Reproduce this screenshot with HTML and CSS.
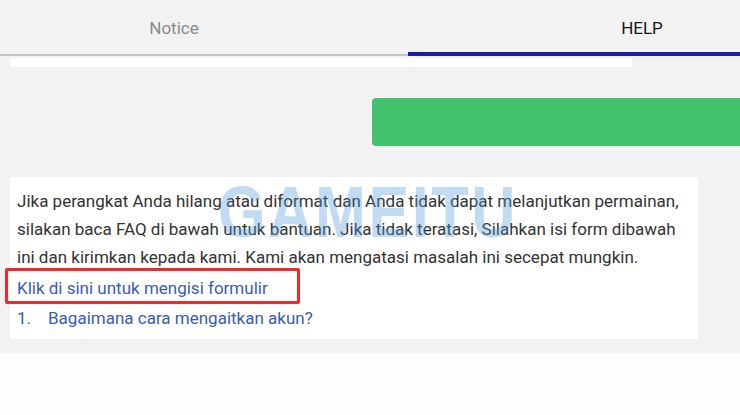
FILE: index.html
```html
<!DOCTYPE html>
<html lang="id">
<head>
<meta charset="utf-8">
<title>HELP</title>
<link rel="stylesheet" href="styles.css">
</head>
<body>
<div class="screen">
  <div class="tabs">
    <div class="tab">Notice</div>
    <div class="tab active">HELP</div>
  </div>
  <div class="content">
    <div class="prev-card"></div>
    <div class="green-row"><div class="green-btn"></div></div>
    <div class="card">
      <p class="msg">Jika perangkat Anda hilang atau diformat dan Anda tidak dapat melanjutkan permainan, silakan baca FAQ di bawah untuk bantuan. Jika tidak teratasi, Silahkan isi form dibawah ini dan kirimkan kepada kami. Kami akan mengatasi masalah ini secepat mungkin.</p>
      <div class="form-link"><a href="#">Klik di sini untuk mengisi formulir</a><span class="highlight"></span></div>
      <div class="faq"><span class="num">1.</span><a href="#">Bagaimana cara mengaitkan akun?</a></div>
    </div>
  </div>
  <div class="watermark">GAMEITU</div>
</div>
</body>
</html>
```

FILE: styles.css
```css
html, body {
  margin: 0;
  padding: 0;
  background: #fdfdfd;
  font-family: Roboto, "Noto Sans", "Liberation Sans", sans-serif;
}
.screen {
  position: relative;
  width: 740px;
  height: 353px;
  background: #f2f2f2;
  overflow: hidden;
}
.tabs {
  display: flex;
  margin-left: -60px;
  width: 936px;
  height: 56px;
}
.tab {
  width: 468px;
  box-sizing: border-box;
  height: 56px;
  display: flex;
  align-items: center;
  justify-content: center;
  padding-top: 1px;
  font-size: 17px;
  color: #8a8a8a;
  border-bottom: 2px solid #c4c4c4;
}
.tab.active {
  color: #161616;
  border-bottom: 4px solid #1c1ca6;
  padding-top: 3px;
}
.content {
  padding: 2px 0 0 10px;
}
.prev-card {
  width: 622px;
  height: 9px;
  background: #ffffff;
}
.green-row {
  display: flex;
  justify-content: flex-end;
  margin-top: 31px;
  margin-right: -20px;
}
.green-btn {
  width: 388px;
  height: 48px;
  background: #43c16d;
  border-radius: 4px;
}
.card {
  margin-top: 31px;
  width: 688px;
  box-sizing: border-box;
  background: #ffffff;
  padding: 10px 7px 7px 7px;
  border-radius: 2px;
}
.msg {
  margin: 0;
  font-size: 17px;
  line-height: 28px;
  color: #333333;
}
.form-link {
  position: relative;
  margin-top: 3px;
  font-size: 17px;
  line-height: 28px;
}
.form-link a, .faq a {
  color: #3a5cb3;
  text-decoration: none;
}
.highlight {
  position: absolute;
  left: -12px;
  top: -6px;
  width: 289px;
  height: 30px;
  border: 3px solid #ee2a2a;
  border-radius: 2px;
}
.faq {
  margin-top: 2px;
  font-size: 17px;
  line-height: 28px;
  color: #3a5cb3;
  display: flex;
}
.faq .num {
  width: 31px;
}
.watermark {
  position: absolute;
  left: 218px;
  top: 170px;
  font-family: "Liberation Sans", Arial, sans-serif;
  font-weight: bold;
  font-size: 72px;
  line-height: 84px;
  letter-spacing: 3px;
  color: rgba(80, 155, 220, 0.36);
  transform: scaleX(0.85);
  transform-origin: left top;
  pointer-events: none;
}
```
